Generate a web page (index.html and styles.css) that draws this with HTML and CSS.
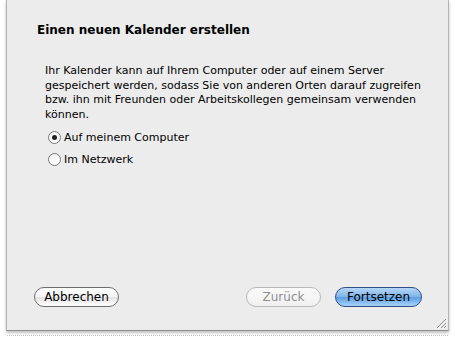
FILE: index.html
```html
<!DOCTYPE html>
<html lang="de">
<head>
    <meta charset="UTF-8">
    <title>Kalender erstellen</title>
    <link rel="stylesheet" href="styles.css">
</head>
<body>
    <div class="sheet">
        <h1 class="title">Einen neuen Kalender erstellen</h1>
        <p class="info">Ihr Kalender kann auf Ihrem Computer oder auf einem Server gespeichert werden, sodass Sie von anderen Orten darauf zugreifen bzw. ihn mit Freunden oder Arbeitskollegen gemeinsam verwenden können.</p>

        <div class="options">
            <label class="option"><span class="radio checked"></span>Auf meinem Computer</label>
            <label class="option"><span class="radio"></span>Im Netzwerk</label>
        </div>

        <div class="buttons">
            <button class="btn cancel">Abbrechen</button>
            <div class="right">
                <button class="btn disabled">Zurück</button>
                <button class="btn primary">Fortsetzen</button>
            </div>
        </div>

        <svg class="grip" width="11" height="11" viewBox="0 0 11 11">
            <path d="M10 1 L1 10 M10 5 L5 10 M10 8 L8 10" stroke="#8a8a8a" stroke-width="1"/>
            <path d="M11 2 L2 11 M11 6 L6 11" stroke="#ffffff" stroke-width="1"/>
        </svg>
    </div>
    <div class="shade"></div>
</body>
</html>
```

FILE: styles.css
```css
body{
    margin: 0;
    background: #ffffff;
    font-family: "DejaVu Sans", "Liberation Sans", sans-serif;
    font-size: 11px;
    color: #000000;
}

.sheet{
    position: relative;
    margin: 0 6px;
    height: 331px;
    box-sizing: border-box;
    background: #ececec;
    border-left: 1px solid #b4b4b4;
    border-right: 1px solid #b4b4b4;
    border-bottom: 1px solid #8c8c8c;
    box-shadow: 0 2px 3px rgba(0,0,0,0.25);
    display: flex;
    flex-direction: column;
    padding: 22px 26px 23px 27px;
}
.title{
    margin: 0 0 0 3px;
    font-size: 12px;
    line-height: 16px;
    font-weight: bold;
}
.info{
    margin: 26px 0 0 11px;
    width: 380px;
    line-height: 14.7px;
}
.options{
    margin: 8px 0 0 14px;
    display: flex;
    flex-direction: column;
    gap: 8px;
}
.option{
    display: flex;
    align-items: center;
    gap: 3px;
    height: 14px;
}
.radio{
    width: 11px;
    height: 11px;
    border-radius: 50%;
    border: 1px solid #7a7a7a;
    background: linear-gradient(#f2f2f2, #ffffff);
    position: relative;
}
.radio.checked::after{
    content: "";
    position: absolute;
    left: 3px;
    top: 3px;
    width: 5px;
    height: 5px;
    border-radius: 50%;
    background: #222222;
}
.buttons{
    margin-top: auto;
    display: flex;
    justify-content: space-between;
}
.right{
    display: flex;
    gap: 14px;
}
.btn{
    font-family: inherit;
    font-size: 12px;
    height: 20px;
    padding: 0;
    border-radius: 10px;
    border: 1px solid #6e6e6e;
    background: linear-gradient(#ffffff 0%, #f4f4f4 50%, #e2e2e2 51%, #ffffff 100%);
    color: #000000;
    line-height: 18px;
}
.btn.cancel{
    width: 85px;
}
.btn.disabled{
    color: #8e8e8e;
    border-color: #b8b8b8;
    background: linear-gradient(#fafafa, #f0f0f0);
    width: 75px;
}
.btn.primary{
    width: 87px;
    border-color: #2f4f86;
    background: linear-gradient(#b6d6f6 0%, #7eb4ea 50%, #5c9ce0 51%, #a8d4fa 100%);
}
.grip{
    position: absolute;
    right: 1px;
    bottom: 1px;
}
.shade{
    margin: 4px 7px 0;
    height: 1px;
    border-top: 1px dotted #c8c8c8;
}
```
